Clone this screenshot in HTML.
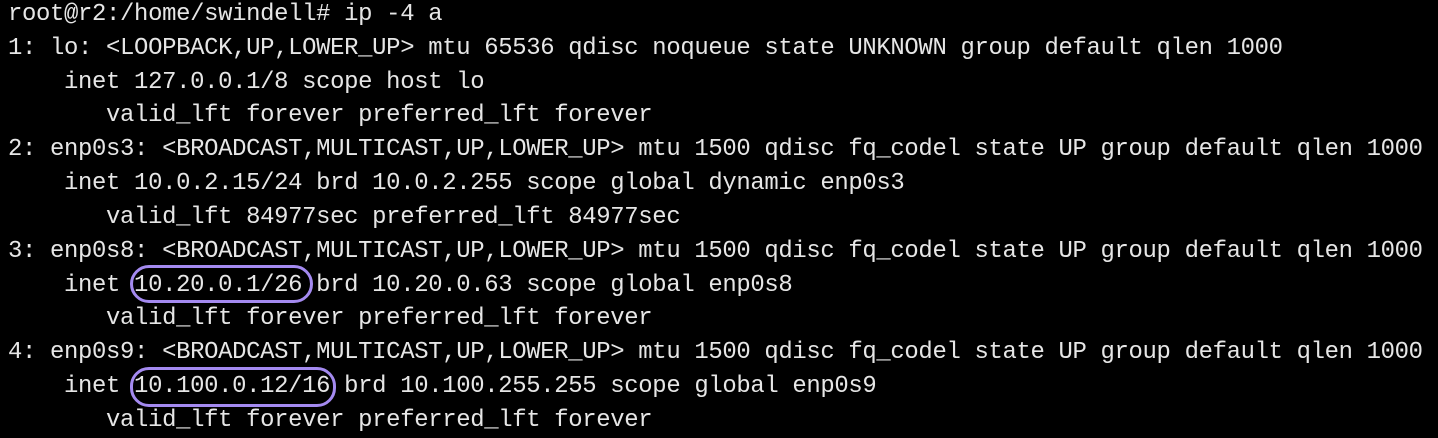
<!DOCTYPE html>
<html><head><style>
html,body{margin:0;padding:0;background:#000;width:1438px;height:436px;overflow:hidden}
pre{margin:0;position:absolute;left:8px;top:-2px;font-family:"Liberation Mono","DejaVu Sans Mono",monospace;font-size:23.9px;letter-spacing:-0.33px;line-height:33.83px;color:#e6e6e6}
.b{position:absolute;border:3px solid #a48af0;border-radius:19px;box-sizing:border-box}
</style></head><body>
<pre>root@r2:/home/swindell# ip -4 a
1: lo: &lt;LOOPBACK,UP,LOWER_UP&gt; mtu 65536 qdisc noqueue state UNKNOWN group default qlen 1000
    inet 127.0.0.1/8 scope host lo
       valid_lft forever preferred_lft forever
2: enp0s3: &lt;BROADCAST,MULTICAST,UP,LOWER_UP&gt; mtu 1500 qdisc fq_codel state UP group default qlen 1000
    inet 10.0.2.15/24 brd 10.0.2.255 scope global dynamic enp0s3
       valid_lft 84977sec preferred_lft 84977sec
3: enp0s8: &lt;BROADCAST,MULTICAST,UP,LOWER_UP&gt; mtu 1500 qdisc fq_codel state UP group default qlen 1000
    inet 10.20.0.1/26 brd 10.20.0.63 scope global enp0s8
       valid_lft forever preferred_lft forever
4: enp0s9: &lt;BROADCAST,MULTICAST,UP,LOWER_UP&gt; mtu 1500 qdisc fq_codel state UP group default qlen 1000
    inet 10.100.0.12/16 brd 10.100.255.255 scope global enp0s9
       valid_lft forever preferred_lft forever</pre>
<div class="b" style="left:130px;top:265px;width:183px;height:38px"></div>
<div class="b" style="left:130px;top:367px;width:206px;height:40px"></div>
</body></html>
